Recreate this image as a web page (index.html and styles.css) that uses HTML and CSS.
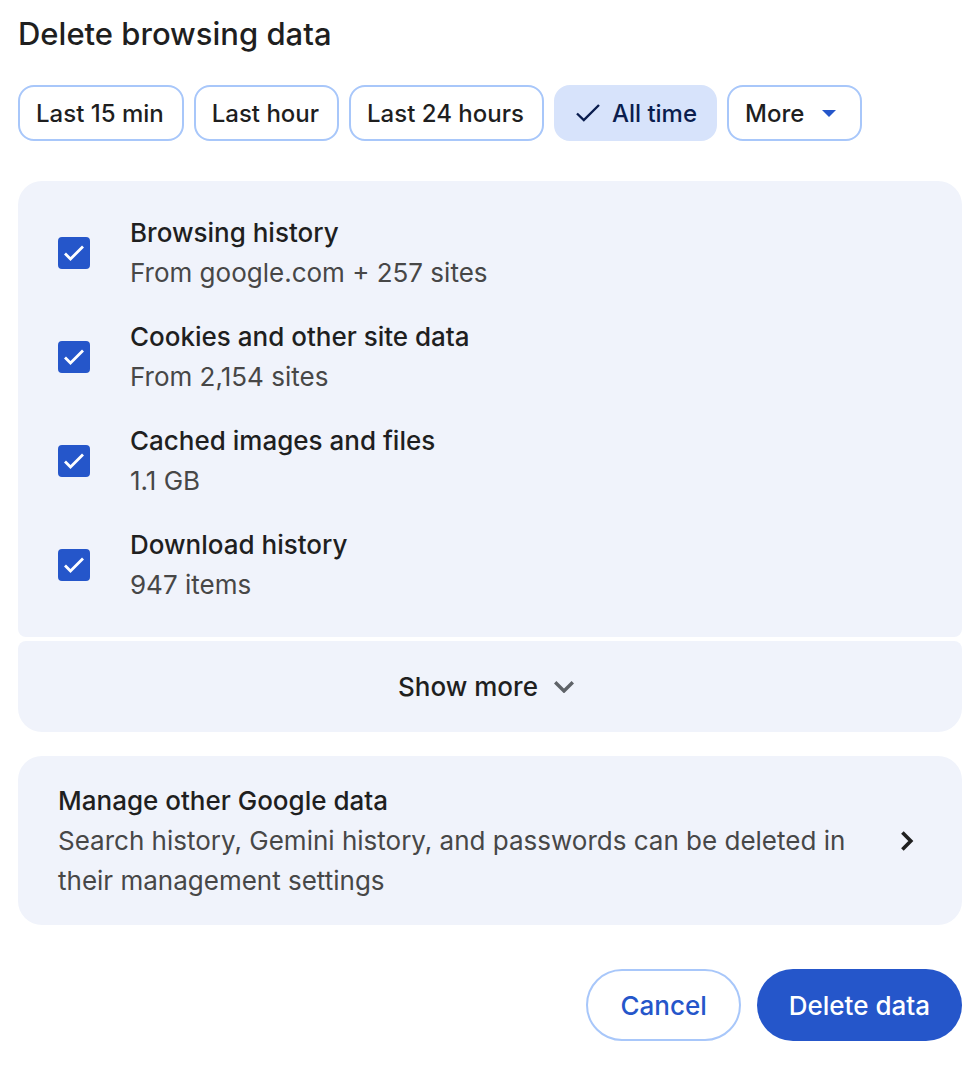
FILE: index.html
```
<!DOCTYPE html>
<html lang="en">
<head>
    <meta charset="UTF-8">
    <meta name="viewport" content="width=device-width, initial-scale=1.0">
    <title>Delete browsing data</title>
    <link rel="stylesheet" href="styles.css">
</head>
<body>
    <main class="dialog">
        <h1>Delete browsing data</h1>

        <div class="time-range">
            <button type="button" class="chip">Last 15 min</button>
            <button type="button" class="chip">Last hour</button>
            <button type="button" class="chip">Last 24 hours</button>
            <button type="button" class="chip selected" aria-pressed="true">
                <svg width="24" height="18" viewBox="0 0 24 18" fill="none" stroke="currentColor" stroke-width="2.4" aria-hidden="true">
                    <path d="M1 9.5L7.8 16L23 1"/>
                </svg>
                All time
            </button>
            <select class="chip more" aria-label="More time ranges">
                <option>More</option>
                <option>Last 7 days</option>
                <option>Last 4 weeks</option>
            </select>
        </div>

        <form id="deleteForm">
            <div class="card data-types">
                <div class="data-row">
                    <input type="checkbox" id="history" name="history" checked>
                    <label for="history">Browsing history <span>From google.com + 257 sites</span></label>
                </div>
                <div class="data-row">
                    <input type="checkbox" id="cookies" name="cookies" checked>
                    <label for="cookies">Cookies and other site data <span>From 2,154 sites</span></label>
                </div>
                <div class="data-row">
                    <input type="checkbox" id="cache" name="cache" checked>
                    <label for="cache">Cached images and files <span>1.1 GB</span></label>
                </div>
                <div class="data-row">
                    <input type="checkbox" id="downloads" name="downloads" checked>
                    <label for="downloads">Download history <span>947 items</span></label>
                </div>
            </div>

            <button type="button" class="card show-more">
                Show more
                <svg width="20" height="13" viewBox="0 0 20 13" fill="none" stroke="#5f6368" stroke-width="3.4" aria-hidden="true">
                    <path d="M1.2 2.2L10 11L18.8 2.2"/>
                </svg>
            </button>

            <a href="#" class="card manage">
                <span class="manage-text">
                    <strong>Manage other Google data</strong>
                    <span>Search history, Gemini history, and passwords can be deleted in their management settings</span>
                </span>
                <svg width="13" height="20" viewBox="0 0 13 20" fill="none" stroke="currentColor" stroke-width="3.6" aria-hidden="true">
                    <path d="M1.4 1.6L9.8 10L1.4 18.4"/>
                </svg>
            </a>

            <div class="actions">
                <button type="button" class="btn btn-cancel">Cancel</button>
                <button type="submit" class="btn btn-delete">Delete data</button>
            </div>
        </form>
    </main>
</body>
</html>
```
FILE: styles.css
```
* {
    margin: 0;
    padding: 0;
    box-sizing: border-box;
}

:root {
    --blue: #2556ca;
    --outline: #a8c7fa;
    --selected: #d7e3fb;
    --navy: #0a1d4e;
    --card: #f0f3fb;
    --text: #1f1f1f;
    --text-light: #474747;
}

body {
    background-color: #fff;
    color: var(--text);
    font-family: Inter, 'Liberation Sans', sans-serif;
    font-size: 26px;
    line-height: 40px;
}

button,
select {
    font-family: inherit;
    color: inherit;
    cursor: pointer;
}

.dialog {
    padding: 14px 18px 28px;
}

h1 {
    font-size: 31px;
    font-weight: 500;
    line-height: 40px;
}

.time-range {
    display: flex;
    flex-wrap: wrap;
    gap: 10px;
    margin: 31px 0 40px;
}

.chip {
    display: flex;
    align-items: center;
    height: 56px;
    padding: 0 18px 0 16px;
    border: 2px solid var(--outline);
    border-radius: 16px;
    background-color: #fff;
    font-size: 24px;
    font-weight: 500;
}

.chip.selected {
    gap: 12px;
    padding-left: 20px;
    border-color: var(--selected);
    background-color: var(--selected);
    color: var(--navy);
}

.chip.more {
    appearance: none;
    field-sizing: content;
    padding-right: 56px;
    background-image: url("data:image/svg+xml,%3Csvg xmlns='http://www.w3.org/2000/svg' width='14' height='7'%3E%3Cpath d='M0 0h14L7 7z' fill='%232556ca'/%3E%3C/svg%3E");
    background-repeat: no-repeat;
    background-position: right 24px center;
}

.card {
    width: 100%;
    border: none;
    border-radius: 24px;
    background-color: var(--card);
}

.data-types {
    display: flex;
    flex-direction: column;
    gap: 24px;
    padding: 32px 40px;
    border-radius: 24px 24px 8px 8px;
}

.data-row {
    display: flex;
    align-items: center;
    gap: 40px;
}

.data-row input {
    appearance: none;
    flex: none;
    width: 32px;
    height: 32px;
    border: 2px solid var(--text-light);
    border-radius: 4px;
    cursor: pointer;
}

.data-row input:checked {
    border-color: var(--blue);
    background: var(--blue) url("data:image/svg+xml,%3Csvg xmlns='http://www.w3.org/2000/svg' width='22' height='18' fill='none' stroke='white' stroke-width='2.8'%3E%3Cpath d='M2 9.5L7.5 15L20 2.5'/%3E%3C/svg%3E") center no-repeat;
}

.data-row label {
    font-weight: 500;
}

.data-row label span {
    display: block;
    font-weight: 400;
    color: var(--text-light);
}

.show-more {
    display: flex;
    align-items: center;
    justify-content: center;
    gap: 16px;
    height: 91px;
    margin: 4px 0 24px;
    padding-right: 8px;
    border-radius: 8px 8px 24px 24px;
    font-size: 26px;
    font-weight: 500;
}

.manage {
    display: flex;
    align-items: center;
    gap: 40px;
    padding: 25px 48px 24px 40px;
    color: inherit;
    text-decoration: none;
}

.manage-text {
    flex: 1;
}

.manage-text strong {
    display: block;
    font-weight: 500;
}

.manage-text span {
    color: var(--text-light);
}

.manage svg {
    flex: none;
}

.actions {
    display: flex;
    justify-content: flex-end;
    gap: 16px;
    margin-top: 44px;
}

.btn {
    height: 72px;
    padding: 0 32px;
    border: 2px solid var(--outline);
    border-radius: 36px;
    font-size: 26px;
    font-weight: 500;
}

.btn-cancel {
    background-color: #fff;
    color: var(--blue);
}

.btn-delete {
    border: none;
    background-color: var(--blue);
    color: #fff;
}
```
